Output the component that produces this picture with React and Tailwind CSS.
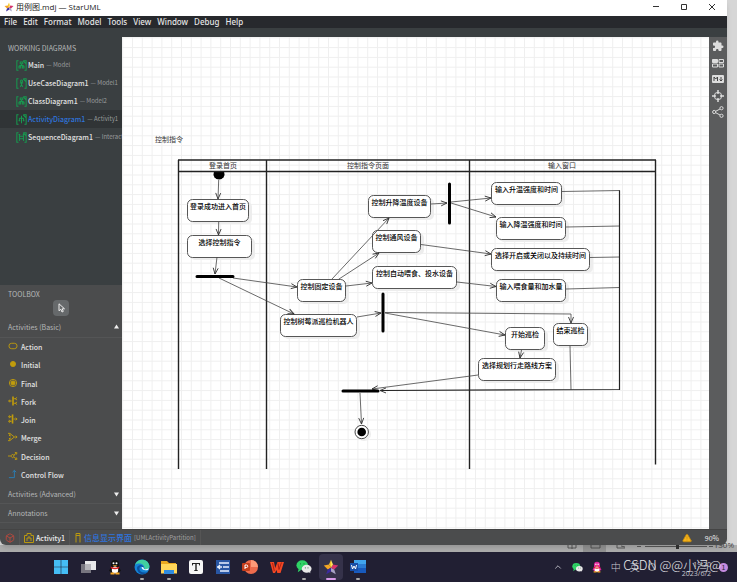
import React from "react";
import { AlertTriangle, Box, ChevronUp } from "lucide-react";
import { MdExtension } from "react-icons/md";

const menus = ["File", "Edit", "Format", "Model", "Tools", "View", "Window", "Debug", "Help"];

const diagrams = [
  { name: "Main", owner: "Model", kind: "class" },
  { name: "UseCaseDiagram1", owner: "Model1", kind: "usecase" },
  { name: "ClassDiagram1", owner: "Model2", kind: "class" },
  { name: "ActivityDiagram1", owner: "Activity1", kind: "activity", active: true },
  { name: "SequenceDiagram1", owner: "Interaction1", kind: "sequence" },
];

const glyphs = {
  class: "M5 2.500h3v2H5zM3.500 7.500h2v2h-2zM7.500 7.500h2v2h-2zM6.500 4.500v2M4.500 7.500v-1h4v1",
  usecase: "M6.500 2.500a1.200 1.200 0 1 0 .1 0M6.500 5v3M4.500 6h4M6.500 8l-1.500 2.500M6.500 8L8 10.500",
  activity: "M6.500 2v9M4 5h5M4 5v3M9 5v3M3 8h2M8 8h2",
  sequence: "M4 2.500v8M9 2.500v8M4 5h5M9 8H4M3 3h2M8 3h2",
};

function DiagramIcon({ kind, className }) {
  return (
    <svg className={className} viewBox="0 0 13 13" fill="none" stroke="currentColor" strokeWidth="1.200" aria-hidden="true">
      <path d="M3 1H1v11h2M8.500 1H12v11h-2M8.500 1L12 4.500" />
      <path d={glyphs[kind]} />
    </svg>
  );
}

const tools = [
  { name: "Action", art: <rect x="1" y="2" width="9" height="6" rx="3" /> },
  { name: "Initial", art: <circle cx="5.500" cy="5" r="2.800" fill="currentColor" /> },
  { name: "Final", art: <><circle cx="5.500" cy="5" r="4" /><circle cx="5.500" cy="5" r="2.300" fill="currentColor" /></> },
  { name: "Fork", art: <><path d="M0 5h4M6 2.500h3M6 7.500h3M10 1L8 2.500 10 4M10 6L8 7.500 10 9M2 3.500v3" /><path d="M5.500 0v10" strokeWidth="1.800" /></> },
  { name: "Join", art: <><path d="M0 2.500h4M0 7.500h4M1 1l2 1.500L1 4M1 6l2 1.500L1 9M6 5h4M8.500 3.500L10 5 8.500 6.500" /><path d="M5 0v10" strokeWidth="1.800" /></> },
  { name: "Merge", art: <path d="M0 1h2l5 4-5 4H0M2 1v3M2 6v3M1 3l2 1M1 7l2-1M7 5h3M8.500 3.500L10 5 8.500 6.500" /> },
  { name: "Decision", art: <path d="M0 5h3M3 5l2-2 2 2-2 2zM6 4l3-2M6 6l3 2M7.500 1L10 1.500 9 3.500M7.500 9L10 8.500 9 6.500" /> },
  { name: "Control Flow", blue: true, art: <path d="M1 9h6V1M5 3l2-2 2 2" /> },
];

const nodes = [
  [187, 199, 62, "登录成功进入首页"],
  [187, 235, 65, "选择控制指令"],
  [297, 279, 49, "控制固定设备"],
  [280, 314, 77, "控制树莓派巡检机器人"],
  [368, 195, 63, "控制升降温度设备"],
  [372, 230, 49, "控制通风设备"],
  [372, 266, 85, "控制自动喂食、投水设备"],
  [491, 182, 71, "输入升温强度和时间"],
  [496, 217, 70, "输入降温强度和时间"],
  [491, 248, 99, "选择开启或关闭以及持续时间"],
  [496, 279, 70, "输入喂食量和加水量"],
  [505, 327, 40, "开始巡检"],
  [553, 323, 35, "结束巡检"],
  [478, 358, 78, "选择规划行走路线方案"],
];

const arrows = [
  "M218.700 180L218 199", "M218.700 222L218.500 235", "M217 257L215 274",
  "M233 278L297 287", "M219 278L294 314", "M332 279L389 218", "M339 279L379 253",
  "M346 286L372 283", "M357 317L381 313", "M431 204L447 203", "M451 202L491 198",
  "M451 203L496 217", "M421 244.500L491 254", "M457 282L496 286.500",
  "M385 312.500L450 313L571 314V323", "M385 313L505 335", "M521.500 350L520 358",
  "M478 375L372 389", "M360 393L361.500 424",
];

const lines = "M562 191.500L620 190.500M566 227L620 226M590 257.500L620 257M566 289L620 287.500M570 346L571 389.500";

function Diagram() {
  return (
    <svg className="block h-full w-full" role="img" aria-label="控制指令">
      <defs>
        <pattern id="grid" x="10" y="0.300" width="9.800" height="9.800" patternUnits="userSpaceOnUse">
          <path d="M0 .5H9.800M.5 0V9.800" stroke="#efefef" fill="none" />
        </pattern>
        <marker id="arrow" viewBox="0 0 8 8" refX="7" refY="4" markerWidth="8" markerHeight="8" orient="auto" markerUnits="userSpaceOnUse">
          <path d="M1 1.500L7 4L1 6.500" fill="none" stroke="#333" strokeWidth="0.900" />
        </marker>
      </defs>
      <rect width="100%" height="100%" fill="#fff" />
      <rect width="100%" height="100%" fill="url(#grid)" />
      <g transform="translate(-122 -37)" className="font-['Noto_Sans_CJK_SC',sans-serif] text-[7px]" textAnchor="middle">
        <g fill="#333">
          <text x="169" y="142">控制指令</text>
          <text x="223" y="168">登录首页</text>
          <text x="368" y="168">控制指令页面</text>
          <text x="562" y="168">输入窗口</text>
        </g>
        <path d="M213.900 172A5.500 5.500 0 1 0 224.100 172z" />
        <path d="M178 160H656M178 171.500H656M178.500 160V469M266.500 160V469M469.500 160V469M655.500 160V464.500" fill="none" stroke="#222" strokeWidth="1.400" />
        {nodes.map(([x, y, w, label]) => (
          <g key={label}>
            <rect x={x + 3} y={y + 3} width={w} height="22" rx="5" fill="#ededed" />
            <rect x={x + 0.5} y={y + 0.5} width={w - 1} height="22" rx="5" fill="#fff" stroke="#444" strokeWidth="0.900" />
            <text x={x + w / 2} y={y + 10} fill="#000" fontWeight="500">{label}</text>
          </g>
        ))}
        <path d={lines} fill="none" stroke="#444" strokeWidth="0.800" />
        {arrows.map((d) => (
          <path key={d} d={d} fill="none" stroke="#444" strokeWidth="0.800" markerEnd="url(#arrow)" />
        ))}
        <path d="M619.500 190.500V389.500L380 390.500" fill="none" stroke="#222" strokeWidth="1.200" markerEnd="url(#arrow)" />
        <path d="M197 276.500H233M343 391H378M449.500 184V223M383 294V331" fill="none" stroke="#000" strokeWidth="3" strokeLinecap="round" />
        <circle cx="364" cy="434" r="7" fill="#ededed" />
        <circle cx="361.700" cy="432" r="6.700" fill="#fff" stroke="#333" strokeWidth="0.900" />
        <circle cx="361.700" cy="432" r="4.300" />
      </g>
    </svg>
  );
}

function Star({ className }) {
  return (
    <svg className={className} viewBox="0 0 20 20" aria-hidden="true">
      <path d="M10 1L7.500 7 10 11z" fill="#f6c52b" />
      <path d="M7.500 7L1 8l5 5 4-2z" fill="#f5a623" />
      <path d="M6 13l-2 6 6-3.500V11z" fill="#3b2a9e" />
      <path d="M10 15.500L16 19l-2-6-4-2z" fill="#a7a3c4" />
      <path d="M14 13l5-5-6.500-1L10 11z" fill="#d6336c" />
      <path d="M10 1l2.500 6L10 11z" fill="#ffe45c" />
    </svg>
  );
}

function WeChat({ className }) {
  return (
    <svg className={className} viewBox="0 0 18 16" aria-hidden="true">
      <ellipse cx="7" cy="6" rx="6.500" ry="5.500" fill="#2fd366" />
      <path d="M3 10l-1 4 4-3z" fill="#2fd366" />
      <ellipse cx="12" cy="10" rx="5.500" ry="4.500" fill="#e9e9e9" />
      <path d="M14 13l2 2v-4z" fill="#e9e9e9" />
      <path d="M4.500 4.500h1M8.500 4.500h1M10 9h1M13 9h1" stroke="#17602f" />
    </svg>
  );
}

function Penguin({ className, body = "#111" }) {
  return (
    <svg className={className} viewBox="0 0 14 16" aria-hidden="true">
      <path d="M3 5a4 4 0 0 1 8 0v3l2 4-2 .5V14H3v-1.500L1 12l2-4z" fill={body} />
      <ellipse cx="7" cy="11" rx="3.200" ry="3.500" fill="#fff" />
      <circle cx="5.500" cy="4.300" r="1" fill="#fff" />
      <circle cx="8.500" cy="4.300" r="1" fill="#fff" />
      <path d="M4.500 6.200h5L7 7.500z" fill="#f5a623" />
      <path d="M2.800 7.500q4.200 2.500 8.400 0v1.800q-4.200 2-8.400 0z" fill="#e02020" />
      <path d="M2.500 14.500h4M7.500 14.500h4" stroke="#f5a623" strokeWidth="1.800" />
    </svg>
  );
}

function Triangle({ down }) {
  return (
    <svg className="h-[5px] w-[5px]" viewBox="0 0 5 5" fill="#eee" aria-hidden="true">
      <path d={down ? "M0 .5h5L2.500 4.500z" : "M0 4.500h5L2.500 .5z"} />
    </svg>
  );
}

const apps = [
  { name: "Start", art: <svg viewBox="0 0 16 16"><path d="M1 1h6.700v6.700H1zM8.300 1H15v6.700H8.300zM1 8.300h6.700V15H1zM8.300 8.300H15V15H8.300z" fill="#45bdf5" /></svg> },
  { name: "Task view", art: <svg viewBox="0 0 16 16"><path d="M1 5h10v9H1z" fill="#77757f" /><path d="M5 2h11v9H5z" fill="#e8e8ea" /><path d="M5 5h6v6H5z" fill="#b5b4ba" /></svg> },
  { name: "QQ", art: <Penguin /> },
  { name: "Edge", open: true, art: <svg viewBox="0 0 16 16"><circle cx="8" cy="8" r="7.500" fill="#1583d6" /><path d="M1 6C3-1 14-1 15.500 7c0 3-2.500 4-5 3.500C11 5 5 3 1 6z" fill="#42cfa0" /><path d="M6 8c-2 3 1 7 8 5-4 4-11 2-11-4 0-3 6-5 7 0-1-1-3-2-4-1z" fill="#0b519f" /><path d="M7.500 8.500c1-1 2.500 0 2.500 1.500 2 .5 4 0 5-1l-1 2c-4 1-6-.5-6.500-2.500z" fill="#eaf6ff" /></svg> },
  { name: "Explorer", open: true, art: <svg viewBox="0 0 16 16"><path d="M0 2h6l2 2h7v10H0z" fill="#e9a820" /><path d="M0 5h16v9.500H0z" fill="#ffd65a" /><path d="M3 11h10v4H3z" fill="#2f8be0" /></svg> },
  { name: "Typora", art: <svg viewBox="0 0 16 16"><rect x="1" y="1" width="14" height="14" rx="2" fill="#f6f6f6" /><path d="M4 4h8v2.500h-.7L10.800 5H8.700v6l1.300.5v.5H6v-.5l1.300-.5V5H5.200l-.5 1.500H4z" fill="#222" /></svg> },
  { name: "Editor", art: <svg viewBox="0 0 16 16"><rect x="1" y="1" width="14" height="14" fill="#2856a4" /><path d="M4 4h4M8 4h6M8 8h6M8 12h6M5 12h3M2 8h5M5 6L3 8l2 2" stroke="#e8f0ff" strokeWidth="1.300" fill="none" /></svg> },
  { name: "PowerPoint", art: <svg viewBox="0 0 16 16"><circle cx="9" cy="8" r="7" fill="#ee6c4d" /><path d="M9 1a7 7 0 0 1 7 7H9z" fill="#ff9a78" /><rect y="4" width="8" height="8" rx="1" fill="#c43e1c" /><path d="M3 10V6h1.500a1.200 1.200 0 0 1 0 2.500H3" stroke="#fff" fill="none" /></svg> },
  { name: "WPS", art: <svg viewBox="0 0 16 16"><path d="M1 3h4l1.200 6L8.500 3H15l-3.500 11H8.300L7.500 11 6 14H4z" fill="#f24724" /><path d="M9 4.500l1 6 2.500-7M3.500 4l1.800 8" fill="none" stroke="#a81d10" strokeWidth="0.900" /></svg> },
  { name: "WeChat", open: true, art: <WeChat /> },
  { name: "StarUML", current: true, art: <Star /> },
  { name: "Word", open: true, art: <svg viewBox="0 0 16 16"><path d="M4 1h12v4H4z" fill="#41a5ee" /><path d="M4 5h12v4H4z" fill="#2b7cd3" /><path d="M4 9h12v5H4z" fill="#185abd" /><path d="M0 4h8v8H0z" fill="#174ea6" /><path d="M1.500 6l1 4L4 7l1.500 3 1-4" stroke="#fff" fill="none" /></svg> },
];

export default function App() {
  return (
    <div className="relative flex h-screen flex-col overflow-hidden bg-[#d6d6d6] font-['Noto_Sans_CJK_SC',sans-serif] text-[8px] leading-3">
      <div className="relative z-10 mr-[10px] flex min-h-0 flex-1 flex-col overflow-hidden rounded-b-md bg-[#4b4c4d] shadow-md">
        <header className="flex h-4 shrink-0 items-center bg-white pb-[2px] pl-1 text-[#222]">
          <Star className="mr-[2px] h-[10px] w-[10px]" />
          <h1 className="flex-1 font-['Open_Sans','Noto_Sans_CJK_SC',sans-serif] text-[8px]">用例图.mdj — StarUML</h1>
          <div className="flex items-center gap-4 pr-[9px] text-[#333]">
            <button aria-label="Minimize" className="flex h-3 w-3 items-center justify-center"><svg className="h-2 w-2" viewBox="0 0 8 8" stroke="currentColor"><path d="M1 3.500h6" /></svg></button>
            <button aria-label="Maximize" className="flex h-3 w-3 items-center justify-center"><svg className="h-2 w-2" viewBox="0 0 8 8" stroke="currentColor" fill="none"><path d="M1.500 1.500h5v5h-5z" /></svg></button>
            <button aria-label="Close" className="flex h-3 w-3 items-center justify-center"><svg className="h-2 w-2" viewBox="0 0 8 8" stroke="currentColor"><path d="M1 1l6 6M7 1L1 7" /></svg></button>
          </div>
        </header>
        <nav className="flex h-3 shrink-0 items-center gap-[6px] bg-[#27292d] pl-1 font-['Noto_Sans',sans-serif] text-[8px] font-medium text-[#e6e6e6]">
          {menus.map((m) => <button key={m}>{m}</button>)}
        </nav>
        <div className="flex min-h-0 flex-1">
          <aside className="flex w-[122px] shrink-0 flex-col text-[7px]">
            <section className="h-[257px] shrink-0 overflow-hidden bg-[#3a3f41] pt-[14px]">
              <h2 className="mb-[2px] pl-2 text-[#b5b7b8]">WORKING DIAGRAMS</h2>
              <ul>
                {diagrams.map((d) => (
                  <li key={d.name} className={d.active ? "bg-[#303436]" : ""}>
                    <button className="flex h-[18px] w-full items-center pl-4 whitespace-nowrap">
                      <DiagramIcon kind={d.kind} className="mr-px h-[11px] w-[11px] shrink-0 text-[#17994f]" />
                      <span className={d.active ? "font-medium text-[#2f74dd]" : "font-medium text-[#e2e2e2]"}>{d.name}</span>
                      <span className="ml-[2px] text-[6px] text-[#999c9d]">— {d.owner}</span>
                    </button>
                  </li>
                ))}
              </ul>
            </section>
            <section className="flex min-h-0 flex-1 flex-col pt-[3px]">
              <h2 className="pl-2 text-[#b5b7b8]">TOOLBOX</h2>
              <button aria-label="Select" className="mx-auto flex h-4 w-4 shrink-0 items-center justify-center rounded-sm bg-[#66696b] text-[#eee]">
                <svg className="h-[10px] w-[10px]" viewBox="0 0 10 10" fill="none" stroke="currentColor"><path d="M3 .8v7L4.800 6.200 6 9l1.300-.6L6.200 5.800h2.300z" /></svg>
              </button>
              <button className="flex h-[22px] shrink-0 items-center justify-between border-b border-[#545556] pr-[3px] pl-2 text-[#b5b7b8]">
                <span>Activities (Basic)</span><Triangle />
              </button>
              <ul className="grid min-h-0 flex-1 grid-rows-8 pb-px">
                {tools.map((t) => (
                  <li key={t.name} className="flex">
                    <button className="flex w-full items-center gap-[3px] pl-2 font-medium text-[#e2e2e2]">
                      <svg className={t.blue ? "mb-[2px] h-[10px] w-[10px] text-[#2980b9]" : "mb-[2px] h-[10px] w-[10px] text-[#c09c0c]"} viewBox="0 0 11 10" fill="none" stroke="currentColor" aria-hidden="true">{t.art}</svg>
                      {t.name}
                    </button>
                  </li>
                ))}
              </ul>
              {["Activities (Advanced)", "Annotations"].map((s) => (
                <button key={s} className="flex h-[19px] shrink-0 items-center justify-between border-b border-[#545556] pr-[3px] pl-2 text-[#b5b7b8]">
                  <span>{s}</span><Triangle down />
                </button>
              ))}
              <div className="h-[6px] shrink-0" />
            </section>
          </aside>
          <div className="flex min-w-0 flex-1 flex-col">
            <div className="h-[9px] shrink-0 bg-[#3a3f41]" />
            <main className="min-h-0 flex-1 bg-white"><Diagram /></main>
          </div>
          <div className="flex w-[18px] shrink-0 flex-col bg-[#5b5c5d]">
            <div className="h-[9px] shrink-0 bg-[#3a3f41]" />
            <div className="flex flex-col items-center gap-1 pt-[2px] text-[#ddd]">
              <button aria-label="Extensions" className="flex h-[13px] items-center"><MdExtension className="h-3 w-3" /></button>
              <button aria-label="Minimap" className="flex h-[13px] items-center"><svg className="h-[10px] w-3" viewBox="0 0 12 10" fill="none" stroke="currentColor"><path d="M.5 1.500h5v3h-5z" fill="currentColor" /><path d="M7 1.500h4.500v3H7zM.5 6h5v3h-5zM7 6h4.500v3H7z" /></svg></button>
              <button aria-label="Markdown" className="flex h-3 items-center"><svg className="h-2 w-3" viewBox="0 0 12 8"><rect width="12" height="8" rx="1" fill="currentColor" /><path d="M2 6V2l1.700 2L5.500 2v4M9 2v4M7.500 4.500L9 6l1.500-1.500" stroke="#444" fill="none" /></svg></button>
              <button aria-label="Locate" className="flex h-[13px] items-center"><svg className="h-3 w-3" viewBox="0 0 12 12" fill="none" stroke="currentColor"><circle cx="6" cy="6" r="3.700" /><path d="M6 0v4M6 8v4M0 6h4M8 6h4" strokeWidth="1.500" /></svg></button>
              <button aria-label="Share" className="flex h-3 items-center"><svg className="h-3 w-3" viewBox="0 0 12 12" fill="none" stroke="currentColor"><circle cx="2.200" cy="6" r="1.600" /><circle cx="9.500" cy="2.200" r="1.600" /><circle cx="9.500" cy="9.800" r="1.600" /><path d="M3.700 5.300L8 3M3.700 6.700L8 9" /></svg></button>
            </div>
          </div>
        </div>
        <footer className="flex h-4 shrink-0 items-center border-t border-[#444] text-[7px] text-[#eee]">
          <button aria-label="Project" className="flex h-full w-5 items-center justify-center border-r border-[#555]"><Box className="h-[10px] w-[10px] text-[#c0493d]" /></button>
          <button className="flex h-full items-center gap-[2px] border-r border-[#555] px-1 font-medium">
            <svg className="h-[10px] w-[10px] text-[#b9980f]" viewBox="0 0 10 10" fill="none" stroke="currentColor"><path d="M3 .5h4v2h2.500v7h-9v-7H3zM5 3v2M3 8V5h4v3" /></svg>
            Activity1
          </button>
          <button className="flex h-full items-center gap-[2px] border-r border-[#555] px-1 text-[#2f74dd]">
            <svg className="h-[10px] w-2" viewBox="0 0 8 10" fill="none" stroke="#b9980f"><path d="M2 9.500V.5h4v9M2 2.500h4" /></svg>
            <span className="text-[8px] font-medium">信息显示界面</span>
            <span className="text-[6px] text-[#a0a0a0]">[UMLActivityPartition]</span>
          </button>
          <span className="flex-1" />
          <AlertTriangle className="h-[10px] w-[10px] fill-[#f5b21a] text-[#c58c10]" aria-label="Warning" />
          <span className="mr-2 ml-[13px]">90%</span>
        </footer>
      </div>
      <div className="flex h-[7px] shrink-0 items-end justify-end bg-[#adadad] text-[#444]">
        <svg className="h-[7px] w-[150px]" viewBox="0 0 150 7" fill="none" stroke="currentColor" strokeWidth="0.800" aria-hidden="true">
          <path d="M4 0v3h8V0M8 0v4" /><path d="M19 0h23v7H19z" fill="#929292" stroke="none" />
          <path d="M27 3h9V0M27 0v3M53 0v3h8M57 1l4 1M73 1.500h4M81 1.500h62M145 1.500h4" /><path d="M112 0h3v4h-3z" fill="#333" stroke="none" />
        </svg>
        <span className="mr-[3px] mb-px font-['Open_Sans',sans-serif] text-[8px]">130%</span>
      </div>
      <footer className="flex h-[30px] shrink-0 items-center bg-[#211f33] text-white">
        <div className="flex flex-1 justify-start gap-[3px] pl-[49px]">
          {apps.map((a) => (
            <button key={a.name} aria-label={a.name} className={a.current ? "flex h-[26px] w-6 flex-col items-center justify-between rounded-sm bg-[#35324a] pt-[5px] *:h-4 *:w-4" : "flex h-[26px] w-6 flex-col items-center justify-between pt-[5px] *:h-4 *:w-4"}>
              {a.art}
              <i className={a.current ? "h-[2px]! w-[10px]! rounded bg-[#d79be8]" : a.open ? "h-[2px]! w-1! rounded bg-[#aaa]" : "h-[2px]! w-1!"} />
            </button>
          ))}
        </div>
        <div className="flex items-center pr-[9px] text-[#c9c8d0]">
          <ChevronUp className="mr-[9px] h-[10px] w-[10px]" />
          <WeChat className="mr-2 h-[11px] w-[11px]" />
          <Penguin className="mr-2 h-3 w-3" body="#e0219a" />
          <span className="mr-[9px] text-[10px] font-light">中</span>
          <span className="mr-2 text-[10px] font-light">英</span>
          <span className="mr-[26px] h-2 w-2 rounded-full border border-[#999]" />
          <time className="mt-1 mr-2 text-right font-['Open_Sans',sans-serif] text-[7px] leading-[9px]">19:20<br />2023/6/2</time>
          <span className="flex h-[9px] w-[9px] items-center justify-center rounded-full bg-[#c58be0] text-[7px] leading-none text-[#211f33]">1</span>
        </div>
      </footer>
      <p className="absolute right-4 bottom-2 z-20 font-['Noto_Sans_CJK_SC',sans-serif] text-[13px] leading-[18px] font-light whitespace-nowrap text-[#e8e8ec]">CSDN @@小冯@</p>
    </div>
  );
}
